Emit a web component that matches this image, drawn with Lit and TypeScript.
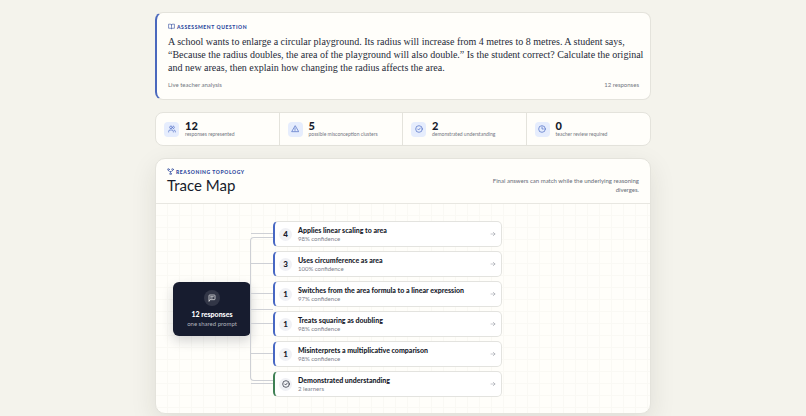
import { LitElement, html, css, svg } from "lit";
import { customElement } from "lit/decorators.js";

const glyphs = {
  book: svg`<path d="M12 6v14M12 6c-1-2-3-2-10-2v14c7 0 9 0 10 2 1-2 3-2 10-2V4c-7 0-9 0-10 2z"/>`,
  users: svg`<circle cx="9" cy="7" r="4"/><path d="M2 21v-2a4 4 0 0 1 4-4h6a4 4 0 0 1 4 4v2M16 3.1a4 4 0 0 1 0 7.8M22 21v-2a4 4 0 0 0-3-3.9"/>`,
  alert: svg`<path d="M12 3 2 20h20zM12 9v5M12 17v.5"/>`,
  check: svg`<circle cx="12" cy="12" r="10"/><path d="m8 12 3 3 5-6"/>`,
  clock: svg`<circle cx="12" cy="12" r="10"/><path d="M12 6v6h4"/>`,
  fork: svg`<circle cx="5" cy="5" r="3"/><circle cx="19" cy="5" r="3"/><circle cx="12" cy="20" r="3"/><path d="M5 8c0 3 2 4 4 4h6c2 0 4-1 4-4M12 12v5"/>`,
  message: svg`<path d="M3 21V5a2 2 0 0 1 2-2h14a2 2 0 0 1 2 2v10a2 2 0 0 1-2 2H7zM8 8h8M8 12h5"/>`,
  arrow: svg`<path d="M4 12h16M13 5l7 7-7 7"/>`,
};

type Glyph = keyof typeof glyphs;

const icon = (name: Glyph) =>
  html`<svg class="icon" viewBox="0 0 24 24" aria-hidden="true">${glyphs[name]}</svg>`;

const stats: { icon: Glyph; value: number; label: string }[] = [
  { icon: "users", value: 12, label: "responses represented" },
  { icon: "alert", value: 5, label: "possible misconception clusters" },
  { icon: "check", value: 2, label: "demonstrated understanding" },
  { icon: "clock", value: 0, label: "teacher review required" },
];

const clusters: { count?: number; title: string; note: string }[] = [
  { count: 4, title: "Applies linear scaling to area", note: "98% confidence" },
  { count: 3, title: "Uses circumference as area", note: "100% confidence" },
  { count: 1, title: "Switches from the area formula to a linear expression", note: "97% confidence" },
  { count: 1, title: "Treats squaring as doubling", note: "98% confidence" },
  { count: 1, title: "Misinterprets a multiplicative comparison", note: "98% confidence" },
  { title: "Demonstrated understanding", note: "2 learners" },
];

@customElement("app-root")
export class AppRoot extends LitElement {
  static styles = css`
    :host {
      display: block;
      box-sizing: border-box;
      min-height: 100vh;
      padding: 12px 12px 2px;
      background: #f4f3ec;
      color: #171b2b;
      font-family: Lato, "Liberation Sans", sans-serif;
      font-size: 6px;
      line-height: 8px;
    }
    * { box-sizing: border-box; }
    h1, h2, p { margin: 0; font-weight: 400; }
    .page {
      display: grid;
      gap: 12px;
      max-width: 496px;
      margin: 0 auto;
    }
    .icon {
      display: block;
      width: 8px;
      height: 8px;
      fill: none;
      stroke: currentColor;
      stroke-width: 2;
      stroke-linecap: round;
      stroke-linejoin: round;
    }
    .card {
      border: 1px solid #e4e3dc;
      border-radius: 8px;
      background: #fffefa;
    }
    .question {
      padding: 10px 3px 10px 11px;
      border-left: 2px solid #4a68bd;
    }
    .eyebrow {
      display: flex;
      align-items: center;
      gap: 2px;
      color: #2b479d;
      font-size: 5px;
      font-weight: 900;
      line-height: 6px;
      letter-spacing: 0.12em;
      text-transform: uppercase;
    }
    .eyebrow .icon { width: 7px; height: 7px; }
    .prompt {
      margin-top: 5px;
      font-family: "Liberation Serif", serif;
      font-size: 10px;
      line-height: 13px;
      color: #262a38;
    }
    .meta {
      display: flex;
      justify-content: space-between;
      margin-top: 7px;
      padding-right: 8px;
      color: #747782;
    }
    .stats {
      display: grid;
      grid-template-columns: repeat(4, 1fr);
      overflow: hidden;
    }
    .stat {
      display: flex;
      align-items: center;
      gap: 6px;
      height: 32px;
      padding: 0 8px;
      border-right: 1px solid #e4e3dc;
    }
    .stat:last-child { border-right: 0; }
    .tile {
      display: grid;
      place-items: center;
      width: 15px;
      height: 15px;
      border-radius: 4px;
      background: #e6edfd;
      color: #4767c3;
    }
    .value {
      font-size: 11px;
      font-weight: 900;
      line-height: 10px;
    }
    .label {
      color: #747782;
      font-size: 5px;
      line-height: 7px;
    }
    .trace {
      overflow: hidden;
      border-radius: 10px;
      box-shadow: 0 8px 26px rgba(40, 40, 30, 0.1);
    }
    .head {
      display: flex;
      align-items: flex-end;
      justify-content: space-between;
      padding: 9px 11px;
      border-bottom: 1px solid #e8e7e1;
    }
    .title {
      margin-top: 1px;
      font-size: 15px;
      line-height: 18px;
    }
    .aside {
      max-width: 160px;
      color: #686c78;
      line-height: 9px;
      text-align: right;
    }
    .map {
      display: grid;
      grid-template-columns: 78px 22px minmax(0, 229px);
      align-items: center;
      padding: 17px 17px 16px;
      background-image:
        linear-gradient(to right, transparent 11px, #faf9f4 11px),
        linear-gradient(to bottom, transparent 11px, #faf9f4 11px);
      background-size: 12px 12px;
    }
    .root {
      display: grid;
      justify-items: center;
      padding: 8px 4px;
      border-radius: 6px;
      background: #171c2f;
      color: #fff;
      text-align: center;
      box-shadow: 0 5px 12px rgba(23, 28, 47, 0.18);
    }
    .bubble {
      display: grid;
      place-items: center;
      width: 16px;
      height: 16px;
      margin-bottom: 4px;
      border-radius: 50%;
      background: #323647;
    }
    .total {
      font-size: 7px;
      font-weight: 900;
      line-height: 9px;
    }
    .shared { color: #b0b3be; line-height: 9px; }
    .bracket {
      display: flex;
      align-items: center;
      align-self: stretch;
      margin: 16px 0 16px -1px;
      border: 1px solid #ced0d5;
      border-right: 0;
      border-radius: 4px 0 0 4px;
    }
    .stub {
      flex: 1;
      border-top: 1px solid #ced0d5;
    }
    .list {
      display: grid;
      gap: 4px;
      margin: 0;
      padding: 0;
      list-style: none;
    }
    .item { position: relative; }
    .item::before {
      content: "";
      position: absolute;
      top: 12px;
      right: 100%;
      width: 22px;
      border-top: 1px solid #ced0d5;
    }
    .cluster {
      display: grid;
      grid-template-columns: 13px 1fr 6px;
      align-items: center;
      column-gap: 6px;
      width: 100%;
      height: 26px;
      padding: 0 5px 0 4px;
      border: 1px solid #e3e3df;
      border-left: 2px solid #4767c3;
      border-radius: 5px;
      background: #fff;
      color: inherit;
      font: inherit;
      text-align: left;
      cursor: pointer;
    }
    .cluster.ok { border-left-color: #3f8054; }
    .count {
      display: grid;
      place-items: center;
      width: 13px;
      height: 13px;
      border-radius: 50%;
      background: #f0f1f5;
      font-size: 8px;
      font-weight: 900;
    }
    .name {
      display: block;
      font-size: 7px;
      font-weight: 900;
      line-height: 9px;
    }
    .note {
      display: block;
      color: #7d808b;
    }
    .go { color: #8b8e98; }
    .go .icon { width: 6px; height: 6px; }
  `;

  render() {
    return html`
      <main class="page">
        <section class="card question">
          <h2 class="eyebrow">${icon("book")}Assessment question</h2>
          <p class="prompt">
            A school wants to enlarge a circular playground. Its radius will increase from 4 metres to 8 metres. A
            student says, “Because the radius doubles, the area of the playground will also double.” Is the student
            correct? Calculate the original and new areas, then explain how changing the radius affects the area.
          </p>
          <div class="meta"><span>Live teacher analysis</span><span>12 responses</span></div>
        </section>

        <section class="card stats">
          ${stats.map(
            (s) => html`<div class="stat">
              <span class="tile">${icon(s.icon)}</span>
              <div>
                <div class="value">${s.value}</div>
                <div class="label">${s.label}</div>
              </div>
            </div>`
          )}
        </section>

        <section class="card trace">
          <header class="head">
            <div>
              <p class="eyebrow">${icon("fork")}Reasoning topology</p>
              <h1 class="title">Trace Map</h1>
            </div>
            <p class="aside">Final answers can match while the underlying reasoning diverges.</p>
          </header>
          <div class="map">
            <div class="root">
              <span class="bubble">${icon("message")}</span>
              <span class="total">12 responses</span>
              <span class="shared">one shared prompt</span>
            </div>
            <div class="bracket"><span class="stub"></span></div>
            <ul class="list">
              ${clusters.map(
                (c) => html`<li class="item">
                  <button type="button" class="cluster ${c.count ? "" : "ok"}">
                    <span class="count">${c.count ?? icon("check")}</span>
                    <span>
                      <span class="name">${c.title}</span>
                      <span class="note">${c.note}</span>
                    </span>
                    <span class="go">${icon("arrow")}</span>
                  </button>
                </li>`
              )}
            </ul>
          </div>
        </section>
      </main>
    `;
  }
}
